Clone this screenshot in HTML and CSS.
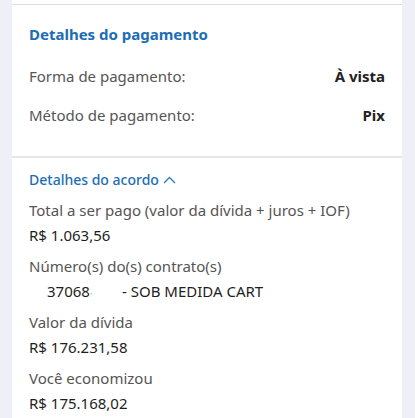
FILE: index.html
```html
<!DOCTYPE html>
<html lang="pt-BR">
<head>
  <meta charset="UTF-8" />
  <meta name="viewport" content="width=device-width, initial-scale=1.0"/>
  <title>Detalhes do pagamento</title>
  <link rel="stylesheet" href="styles.css">
</head>
<body>

<div class="panel">
  <div class="panel-top"></div>

  <section class="payment">
    <h2 class="section-title">Detalhes do pagamento</h2>
    <div class="row">
      <span class="row-label">Forma de pagamento:</span>
      <span class="row-value">À vista</span>
    </div>
    <div class="row">
      <span class="row-label">Método de pagamento:</span>
      <span class="row-value">Pix</span>
    </div>
  </section>

  <section class="agreement">
    <button class="toggle">
      Detalhes do acordo
      <svg width="13" height="8" viewBox="0 0 13 8"><path d="M1 7 L6.5 1.5 L12 7" fill="none" stroke="#2a7bc4" stroke-width="1.3"/></svg>
    </button>

    <div class="item">
      <div class="item-label">Total a ser pago (valor da dívida + juros + IOF)</div>
      <div class="item-value">R$ 1.063,56</div>
    </div>
    <div class="item">
      <div class="item-label">Número(s) do(s) contrato(s)</div>
      <div class="item-value contract"><span class="contract-no">37068<span class="dot">·</span></span><span>- SOB MEDIDA CART</span></div>
    </div>
    <div class="item">
      <div class="item-label">Valor da dívida</div>
      <div class="item-value">R$ 176.231,58</div>
    </div>
    <div class="item">
      <div class="item-label">Você economizou</div>
      <div class="item-value">R$ 175.168,02</div>
    </div>
  </section>
</div>

</body>
</html>
```

FILE: styles.css
```css
body {
  margin: 0;
  font-family: 'Noto Sans', sans-serif;
  background: #eef0f5;
  overflow: hidden;
}

.panel {
  margin: 0 13px 0 12px;
  background: #fff;
  height: 418px;
}

.panel-top {
  height: 4px;
  border-bottom: 1px solid #dedede;
}

.payment {
  padding: 19px 17px 22px 17px;
  border-bottom: 2px solid #e6e6e6;
}

.section-title {
  margin: 0 0 12px;
  font-size: 15px;
  font-weight: bold;
  color: #1c6db5;
}

.row {
  display: flex;
  justify-content: space-between;
  align-items: center;
  height: 39px;
  font-size: 15px;
}

.row-label {
  color: #555;
}

.row-value {
  font-weight: bold;
  color: #222;
}

.agreement {
  padding: 12px 17px 0 17px;
}

.toggle {
  display: flex;
  align-items: center;
  gap: 4px;
  padding: 0;
  border: none;
  background: none;
  font-family: inherit;
  font-size: 14px;
  font-weight: 500;
  color: #1c6db5;
  cursor: pointer;
  margin-bottom: 9px;
}

.item {
  margin-bottom: 6px;
}

.item-label {
  font-size: 15px;
  line-height: 25px;
  color: #555;
}

.item-value {
  font-size: 15px;
  line-height: 25px;
  height: 25px;
  color: #1e1e1e;
}

.contract {
  padding-left: 18px;
}

.contract-no {
  display: inline-block;
  width: 75px;
}

.dot {
  font-size: 8px;
  line-height: 1;
  color: #999;
}
```
